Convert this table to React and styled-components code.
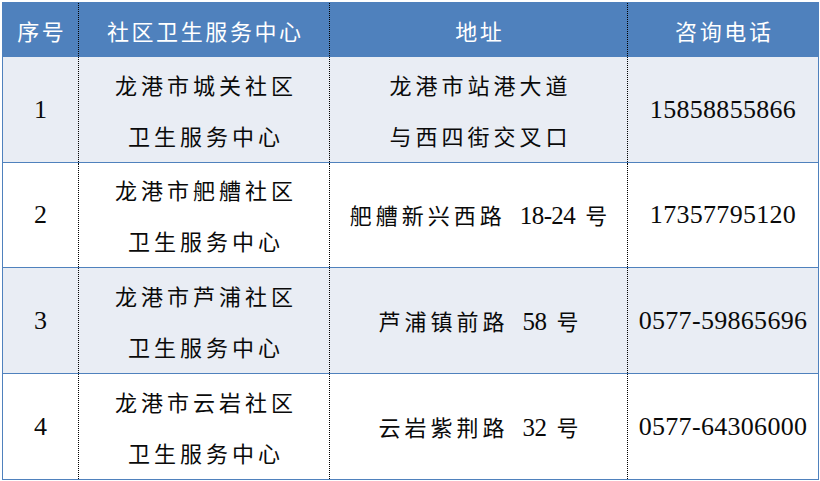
import React from 'react';
import styled, { createGlobalStyle } from 'styled-components';

const Global = createGlobalStyle`
  html, body { margin: 0; padding: 0; background: #fff; }
  body { padding: 2px 0 0 2px; }
`;

const COLS = '75px 251px 298px 191px';

const Table = styled.div`
  width: 817px;
  box-sizing: border-box;
  border: 1px solid #4f81bd;
  font-family: "Liberation Serif", "Noto Sans CJK SC", serif;
  color: #0a0a0a;
`;

const Row = styled.div`
  display: grid;
  grid-template-columns: ${COLS};
  height: ${p => p.$h}px;
  box-sizing: border-box;
  background: ${p => (p.$head ? '#4f81bd' : p.$alt ? '#e9edf4' : '#ffffff')};
  border-top: ${p => (p.$head ? 'none' : '1px solid #4f81bd')};
`;

const Cell = styled.div`
  display: flex;
  align-items: center;
  justify-content: center;
  text-align: center;
  box-sizing: border-box;
  & + & {
    border-left: 1px dotted #000;
  }
`;

const HeadText = styled.span`
  color: #fff;
  font-family: "Noto Sans CJK SC", sans-serif;
  font-size: 22px;
  letter-spacing: 2.6px;
  padding-left: 2.6px;
  line-height: 1;
`;

const CnText = styled.div`
  font-family: "Noto Sans CJK SC", sans-serif;
  font-size: 22px;
  letter-spacing: 4px;
  padding-left: 4px;
  line-height: 51px;
  white-space: nowrap;
`;

const Num = styled.span`
  font-family: "Liberation Serif", serif;
  font-size: 26px;
  letter-spacing: ${p => p.$ls ?? 0}px;
`;

const AddrNum = styled.span`
  font-family: "Liberation Serif", serif;
  font-size: 25px;
  letter-spacing: -0.6px;
  margin: 0 10px 0 14px;
`;

const Index = styled.span`
  font-family: "Liberation Serif", serif;
  font-size: 26px;
`;

const rows = [
  {
    n: '1',
    center: ['龙港市城关社区', '卫生服务中心'],
    addr: [['龙港市站港大道'], ['与西四街交叉口']],
    phone: '15858855866',
    h: 106,
  },
  {
    n: '2',
    center: ['龙港市舥艚社区', '卫生服务中心'],
    addr: [['舥艚新兴西路', '18-24', '号']],
    phone: '17357795120',
    h: 105,
  },
  {
    n: '3',
    center: ['龙港市芦浦社区', '卫生服务中心'],
    addr: [['芦浦镇前路', '58', '号']],
    phone: '0577-59865696',
    h: 106,
  },
  {
    n: '4',
    center: ['龙港市云岩社区', '卫生服务中心'],
    addr: [['云岩紫荆路', '32', '号']],
    phone: '0577-64306000',
    h: 106,
  },
];

function AddrLine({ parts }) {
  return (
    <CnText>
      {parts.map((p, i) =>
        i === 1 ? <AddrNum key={i}>{p}</AddrNum> : <span key={i}>{p}</span>
      )}
    </CnText>
  );
}

export default function App() {
  return (
    <>
      <Global />
      <Table>
        <Row $head $h={53}>
          <Cell>
            <HeadText>序号</HeadText>
          </Cell>
          <Cell>
            <HeadText>社区卫生服务中心</HeadText>
          </Cell>
          <Cell>
            <HeadText>地址</HeadText>
          </Cell>
          <Cell>
            <HeadText>咨询电话</HeadText>
          </Cell>
        </Row>
        {rows.map((r, i) => (
          <Row key={r.n} $alt={i % 2 === 0} $h={r.h}>
            <Cell>
              <Index>{r.n}</Index>
            </Cell>
            <Cell>
              <div>
                {r.center.map(t => (
                  <CnText key={t}>{t}</CnText>
                ))}
              </div>
            </Cell>
            <Cell>
              <div>
                {r.addr.map((parts, j) => (
                  <AddrLine key={j} parts={parts} />
                ))}
              </div>
            </Cell>
            <Cell>
              <Num $ls={0.3}>{r.phone}</Num>
            </Cell>
          </Row>
        ))}
      </Table>
    </>
  );
}
